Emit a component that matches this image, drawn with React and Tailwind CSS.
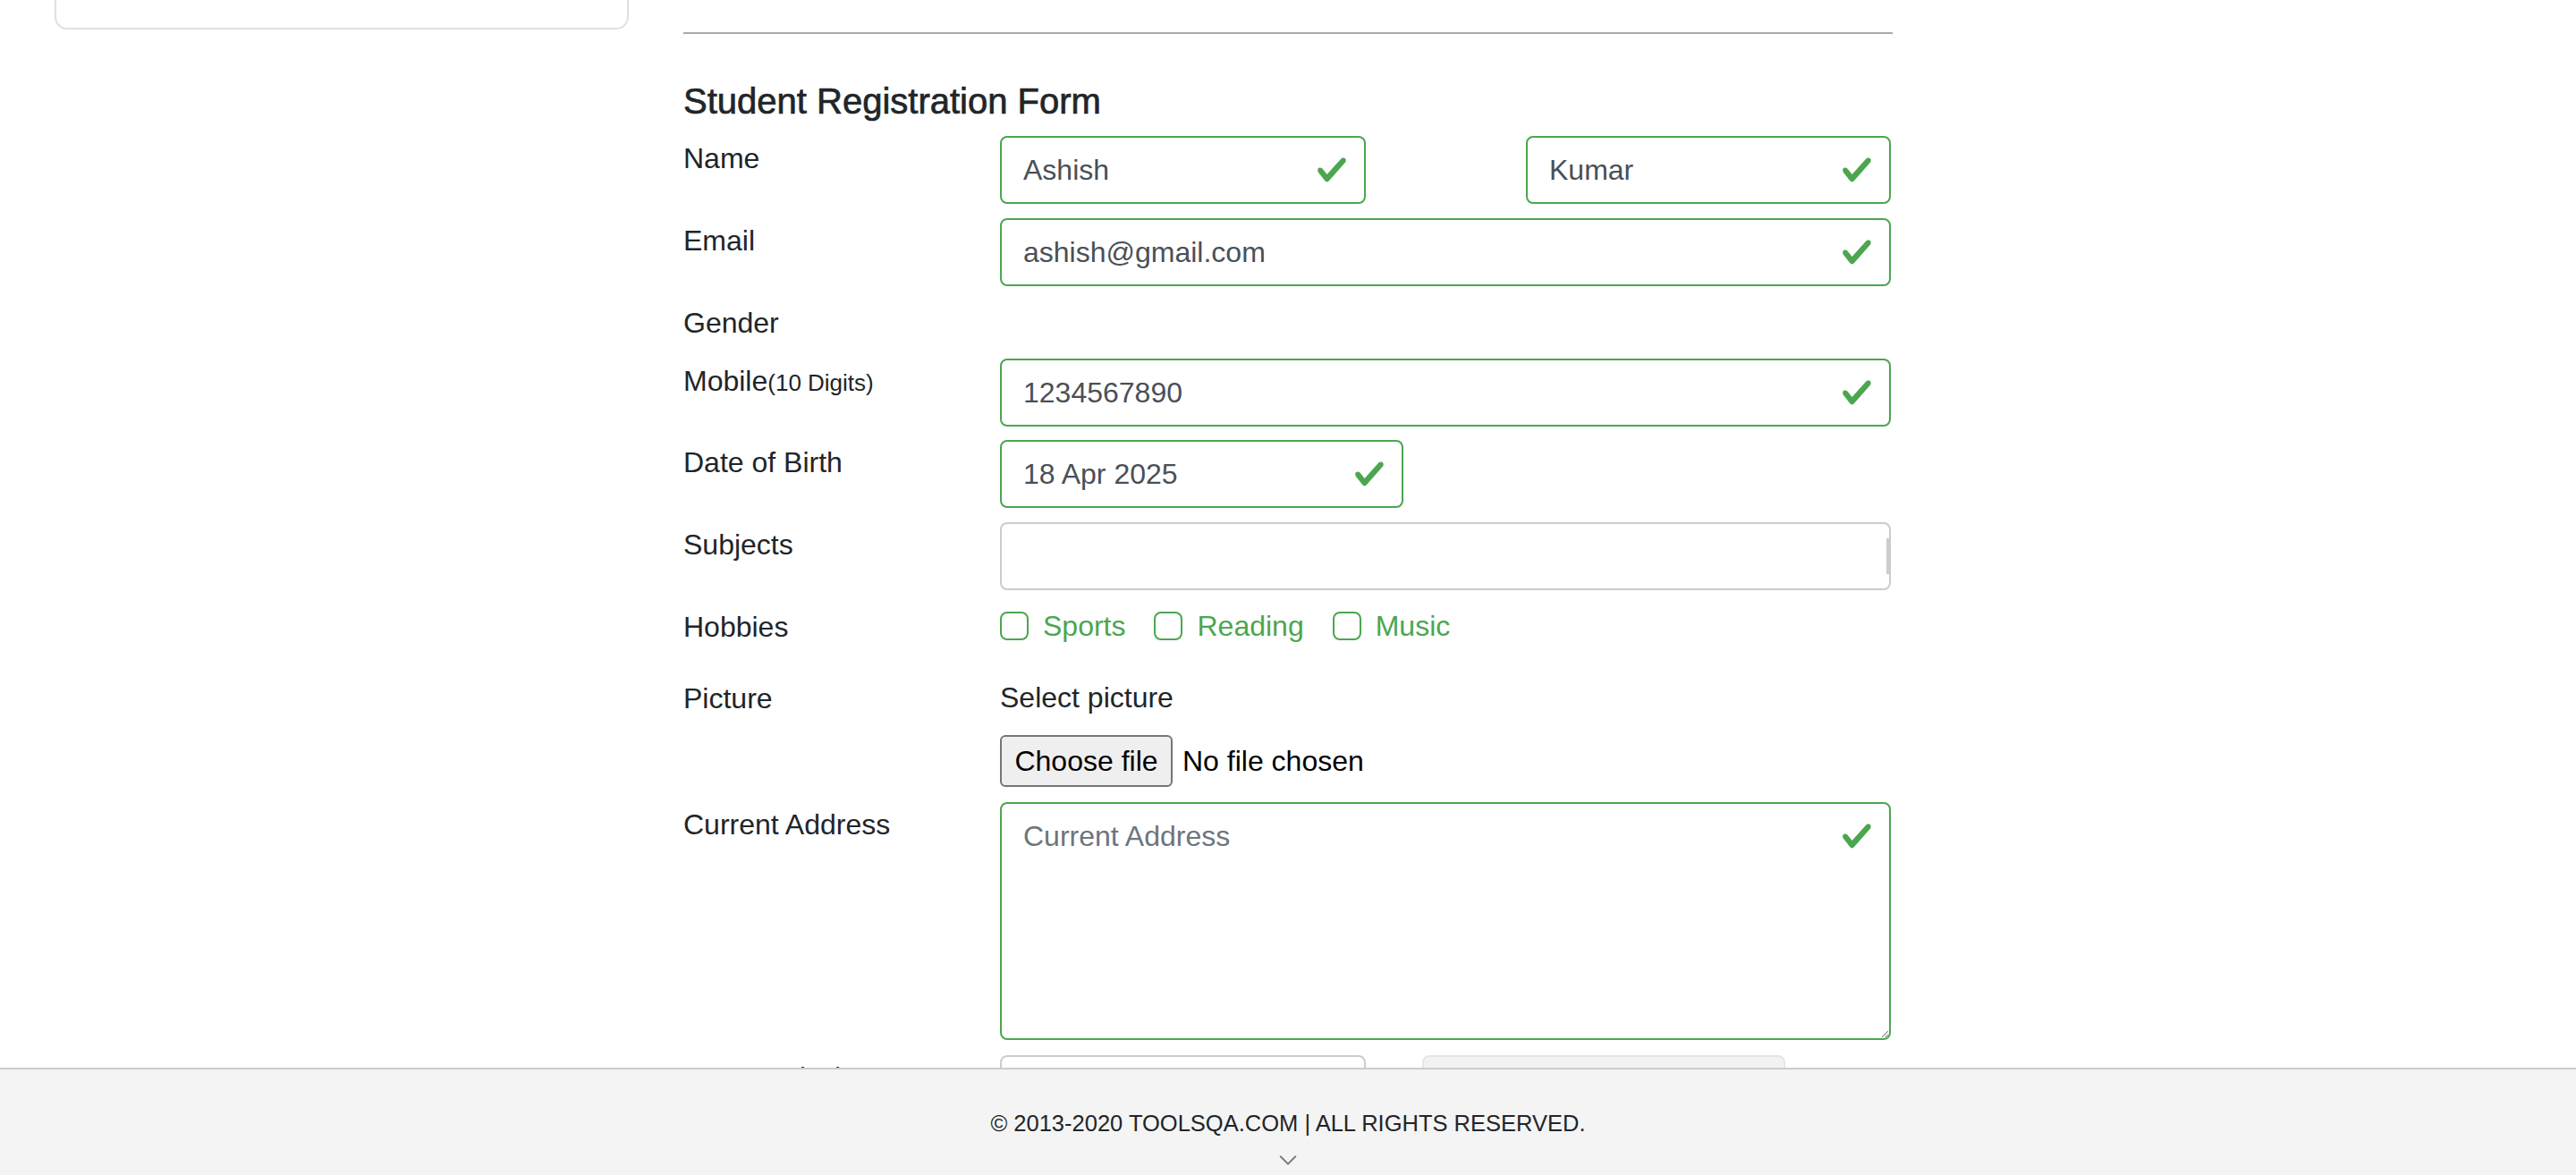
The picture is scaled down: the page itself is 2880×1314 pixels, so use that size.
import { ChevronDown } from 'lucide-react';

const CHECK_PATH = 'M2.3 6.73L.6 4.53c-.4-1.04.46-1.4 1.1-.8l1.1 1.4 3.4-3.8c.6-.63 1.6-.27 1.2.7l-4 4.6c-.43.5-.8.4-1.1.1z';

function ValidMark({ className = '' }) {
  return (
    <svg viewBox="0 0 8 8" className={`w-[36px] h-[36px] shrink-0 ${className}`}>
      <path fill="#4ca64f" d={CHECK_PATH} />
    </svg>
  );
}

function ValidInput({ value, className = '' }) {
  return (
    <div className={`h-[76px] flex items-center justify-between pl-[24px] pr-[18px] border-2 border-[#4ca64f] rounded-[8px] text-[32px] text-[#495057] ${className}`}>
      <span>{value}</span>
      <ValidMark />
    </div>
  );
}

function Row({ label, children, className = '' }) {
  return (
    <div className={`flex items-start ${className}`}>
      <div className="w-[354px] shrink-0 pt-[1px] text-[32px] leading-[48px] text-[#212529]">{label}</div>
      <div className="flex-1 min-w-0">{children}</div>
    </div>
  );
}

const HOBBIES = ['Sports', 'Reading', 'Music'];

export default function App() {
  return (
    <div className="relative h-[1314px] w-full overflow-hidden bg-white font-['Liberation_Sans',Arial,sans-serif]">
      <div className="flex">
        {/* left panel, scrolled mostly off screen */}
        <div className="ml-[61px] w-[642px] shrink-0">
          <div className="-mt-[100px] h-[133px] border-2 border-[#e0e0e0] rounded-[14px]" />
        </div>

        <div className="ml-[61px] w-[1352px]">
          <div className="mt-[36px] h-[2px] bg-[#aaaaaa]" />
          <div className="pr-[2px]">
            <h5 className="mt-[51px] text-[40px] leading-[48px] font-medium text-[#212529] [-webkit-text-stroke:0.7px_#212529]">Student Registration Form</h5>

            <Row label="Name" className="mt-[15px]">
              <div className="flex justify-between">
                <ValidInput value="Ashish" className="w-[409px]" />
                <ValidInput value="Kumar" className="w-[408px]" />
              </div>
            </Row>

            <Row label="Email" className="mt-[16px]">
              <ValidInput value="ashish@gmail.com" />
            </Row>

            <Row label="Gender" className="mt-[16px]">
              <div className="h-[48px]" />
            </Row>

            <Row
              label={<>Mobile<span className="text-[26px]">(10 Digits)</span></>}
              className="mt-[16px]"
            >
              <ValidInput value="1234567890" />
            </Row>

            <Row label="Date of Birth" className="mt-[15px]">
              <ValidInput value="18 Apr 2025" className="w-[451px]" />
            </Row>

            <Row label="Subjects" className="mt-[16px]">
              <div className="relative h-[76px] border-2 border-[#cccccc] rounded-[8px]">
                <div className="absolute right-0 top-[16px] h-[40px] w-[3px] bg-[#cccccc]" />
              </div>
            </Row>

            <Row label="Hobbies" className="mt-[16px]">
              <div className="flex items-center h-[48px]">
                {HOBBIES.map(h => (
                  <div key={h} className="flex items-center mr-[32px]">
                    <div className="w-[32px] h-[32px] border-2 border-[#4ca64f] rounded-[8px] bg-white" />
                    <span className="ml-[16px] text-[32px] leading-[48px] text-[#4ca64f]">{h}</span>
                  </div>
                ))}
              </div>
            </Row>

            <Row label="Picture" className="mt-[31px]">
              <div className="text-[32px] leading-[48px] text-[#212529]">Select picture</div>
              <div className="mt-[18px] flex items-center">
                <div className="h-[58px] w-[193px] flex items-center justify-center bg-[#efefef] border-2 border-[#767676] rounded-[6px] text-[32px] text-black">
                  Choose file
                </div>
                <span className="ml-[11px] text-[32px] text-black">No file chosen</span>
              </div>
            </Row>

            <Row label="Current Address" className="mt-[17px]">
              <div className="relative">
                <textarea
                  rows={5}
                  placeholder="Current Address"
                  className="block w-full h-[266px] border-2 border-[#4ca64f] rounded-[8px] px-[24px] py-[12px] text-[32px] leading-[48px] text-[#495057] placeholder:text-[#6c757d] outline-none resize-y"
                />
                <ValidMark className="absolute top-[20px] right-[20px]" />
              </div>
            </Row>

            <Row label="State and City" className="mt-[17px]">
              <div className="flex">
                <div className="h-[76px] w-[409px] border-2 border-[#cccccc] rounded-[8px]" />
                <div className="ml-[63px] h-[76px] w-[406px] border-2 border-[#e6e6e6] bg-[#f2f2f2] rounded-[8px]" />
              </div>
            </Row>
          </div>
        </div>
      </div>

      {/* fixed footer sits over the form */}
      <footer className="absolute bottom-0 left-0 right-0 h-[120px] border-t-2 border-[#cccccc] bg-[#f4f4f4] flex flex-col items-center">
        <span className="mt-[42px] text-[25.5px] leading-[36px] text-[#212529]">© 2013-2020 TOOLSQA.COM | ALL RIGHTS RESERVED.</span>
        <ChevronDown className="mt-[7px] w-[34px] h-[34px] text-[#777777]" strokeWidth={1.5} />
      </footer>
    </div>
  );
}
